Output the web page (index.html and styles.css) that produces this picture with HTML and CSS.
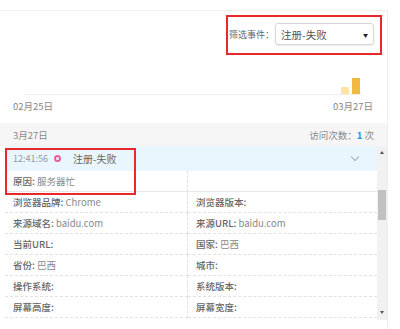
FILE: index.html
```html
<!DOCTYPE html>
<html>
<head>
    <meta charset="UTF-8">
    <title>访问详情</title>
    <link rel="stylesheet" href="styles.css">
</head>
<body>
    <div class="card">
        <div class="toolbar">
            <span class="filter-label">筛选事件：</span>
            <div class="select">
                <span>注册-失败</span>
                <span class="caret">▼</span>
            </div>
        </div>

        <div class="chart">
            <div class="bar light"></div>
            <div class="bar dark"></div>
        </div>
        <div class="axis">
            <span>02月25日</span>
            <span>03月27日</span>
        </div>

        <div class="day-head">
            <span>3月27日</span>
            <span>访问次数：<b class="num">1</b> 次</span>
        </div>

        <div class="list">
            <div class="rows">
                <div class="event">
                    <span class="time">12:41:56</span>
                    <span class="dot"></span>
                    <span class="event-name">注册-失败</span>
                    <span class="chev"></span>
                </div>
                <div class="grid reason">
                    <div class="cell"><b>原因:</b> 服务器忙</div>
                    <div class="cell"></div>
                </div>
                <div class="grid">
                    <div class="cell"><b>浏览器品牌:</b> Chrome</div>
                    <div class="cell"><b>浏览器版本:</b></div>
                    <div class="cell"><b>来源域名:</b> baidu.com</div>
                    <div class="cell"><b>来源URL:</b> baidu.com</div>
                    <div class="cell"><b>当前URL:</b></div>
                    <div class="cell"><b>国家:</b> 巴西</div>
                    <div class="cell"><b>省份:</b> 巴西</div>
                    <div class="cell"><b>城市:</b></div>
                    <div class="cell"><b>操作系统:</b></div>
                    <div class="cell"><b>系统版本:</b></div>
                    <div class="cell"><b>屏幕高度:</b></div>
                    <div class="cell"><b>屏幕宽度:</b></div>
                </div>
            </div>
            <div class="scrollbar">
                <span class="arrow up"></span>
                <span class="thumb"></span>
                <span class="arrow down"></span>
            </div>
        </div>
    </div>

    <div class="mark mark-filter"></div>
    <div class="mark mark-event"></div>
</body>
</html>
```

FILE: styles.css
```css
body {
    margin: 0;
    background: #fff;
    font-family: "Noto Sans CJK SC", "Liberation Sans", sans-serif;
    color: #666;
    font-size: 10px;
}

.card {
    margin-top: 10px;
    width: 387px;
    height: 318px;
    border-top: 1px solid #f0f0f0;
    border-right: 1px solid #eee;
}

.toolbar {
    display: flex;
    justify-content: flex-end;
    align-items: center;
    padding: 12px 13px 0 0;
}

.filter-label {
    white-space: nowrap;
    font-size: 9px;
    color: #666;
    margin-right: 1px;
}

.select {
    width: 87px;
    height: 20px;
    padding: 0 5px;
    display: flex;
    align-items: center;
    justify-content: space-between;
    border: 1px solid #d6d6d6;
    border-radius: 3px;
    box-shadow: 0 1px 2px rgba(0,0,0,0.08);
    color: #555;
    font-size: 10.5px;
}

.caret {
    font-size: 5px;
    color: #222;
}

.chart {
    height: 49px;
    margin: 0 25px 0 25px;
    display: flex;
    justify-content: flex-end;
    align-items: flex-end;
    gap: 3px;
    padding-right: 2px;
    border-bottom: 1px solid #eee;
}

.bar {
    width: 8px;
}

.bar.light {
    height: 7px;
    background: #fce3a8;
}

.bar.dark {
    height: 16px;
    background: #f2b940;
}

.axis {
    display: flex;
    justify-content: space-between;
    padding: 4px 14px 0 13px;
    height: 24px;
    font-size: 9.5px;
    color: #888;
}

.day-head {
    height: 23px;
    display: flex;
    align-items: center;
    justify-content: space-between;
    padding: 0 13px;
    background: #f6f6f6;
    font-size: 9.5px;
    color: #888;
}

.num {
    color: #2b8ee8;
    font-weight: bold;
}

.list {
    display: flex;
    margin-left: 5px;
}

.rows {
    width: 373px;
}

.event {
    height: 25px;
    display: flex;
    align-items: center;
    padding: 0 8px;
    background: #e9f6fd;
    color: #666;
    font-size: 10px;
}

.time {
    color: #999;
    font-size: 9px;
}

.dot {
    width: 3px;
    height: 3px;
    border: 2px solid #e8609a;
    border-radius: 50%;
    margin: 0 12px 0 6px;
}

.chev {
    margin-left: auto;
    margin-right: 11px;
    width: 5px;
    height: 5px;
    border-right: 1px solid #aaa;
    border-bottom: 1px solid #aaa;
    transform: rotate(45deg);
    margin-top: -3px;
}

.grid {
    display: grid;
    grid-template-columns: 183px 1fr;
}

.cell {
    height: 20px;
    line-height: 20px;
    padding-left: 8px;
    border-bottom: 1px dashed #e2e2e2;
    color: #888;
    font-size: 9.5px;
}

.cell:nth-child(odd) {
    border-right: 1px dashed #e2e2e2;
}

.cell b {
    color: #666;
    font-weight: 500;
}

.reason .cell {
    border-bottom: 1px solid #e6e6e6;
}

.scrollbar {
    width: 10px;
    height: 174px;
    background: #f1f1f1;
    display: flex;
    flex-direction: column;
    align-items: center;
}

.arrow {
    width: 0;
    height: 0;
    border-left: 2px solid transparent;
    border-right: 2px solid transparent;
}

.arrow.up {
    margin-top: 5px;
    border-bottom: 3px solid #555;
}

.arrow.down {
    margin-top: auto;
    margin-bottom: 6px;
    border-top: 3px solid #555;
}

.thumb {
    width: 8px;
    height: 30px;
    margin-top: 36px;
    background: #c1c1c1;
}

.mark {
    position: absolute;
    border: 2px solid #e8282b;
}

.mark-filter {
    left: 226px;
    top: 15px;
    width: 152px;
    height: 36px;
}

.mark-event {
    left: 5px;
    top: 148px;
    width: 127px;
    height: 43px;
}
```
